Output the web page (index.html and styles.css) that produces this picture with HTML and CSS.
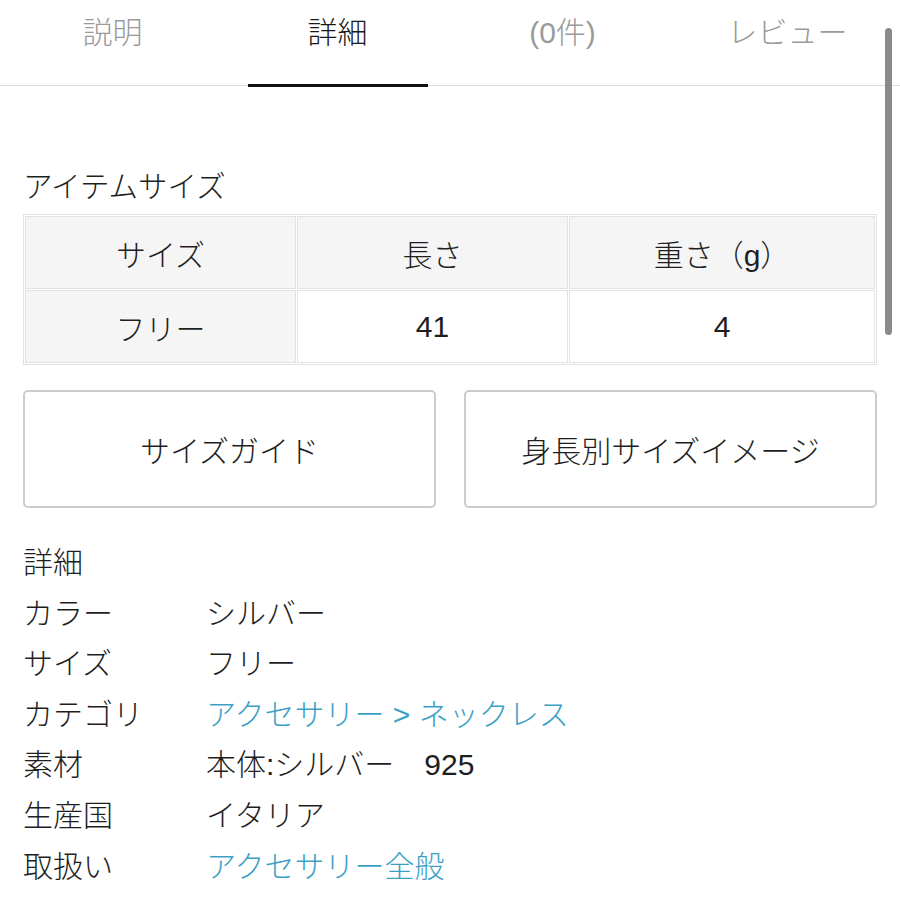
FILE: index.html
```html
<!DOCTYPE html>
<html lang="ja">
<head>
<meta charset="utf-8">
<title>詳細</title>
<link rel="stylesheet" href="styles.css">
</head>
<body>
<div class="page">
  <nav class="tabs">
    <div class="tab">説明</div>
    <div class="tab active">詳細</div>
    <div class="tab">(0件)</div>
    <div class="tab">レビュー</div>
  </nav>

  <section class="content">
    <h2 class="section-title">アイテムサイズ</h2>
    <table class="size-table">
      <tr class="head">
        <td class="c1">サイズ</td>
        <td class="c2">長さ</td>
        <td class="c3">重さ（g）</td>
      </tr>
      <tr>
        <td class="c1 shade">フリー</td>
        <td class="c2">41</td>
        <td class="c3">4</td>
      </tr>
    </table>

    <div class="buttons">
      <div class="btn">サイズガイド</div>
      <div class="btn">身長別サイズイメージ</div>
    </div>

    <div class="details">
      <div class="details-title">詳細</div>
      <div class="label">カラー</div><div class="value">シルバー</div>
      <div class="label">サイズ</div><div class="value">フリー</div>
      <div class="label">カテゴリ</div><div class="value link">アクセサリー &gt; ネックレス</div>
      <div class="label">素材</div><div class="value">本体:シルバー　925</div>
      <div class="label">生産国</div><div class="value">イタリア</div>
      <div class="label">取扱い</div><div class="value link">アクセサリー全般</div>
    </div>
  </section>

  <div class="scrollbar"></div>
</div>
</body>
</html>
```

FILE: styles.css
```css
html, body {
  margin: 0;
  padding: 0;
  background: #ffffff;
}

body {
  font-family: "Liberation Sans", "Noto Sans CJK JP", sans-serif;
  font-weight: 300;
  color: #1e1e1e;
  width: 900px;
  height: 900px;
  overflow: hidden;
}

.page {
  position: relative;
  width: 900px;
  height: 900px;
}

.tabs {
  display: flex;
  height: 85px;
  border-bottom: 1px solid #dcdcdc;
}

.tab {
  position: relative;
  width: 225px;
  text-align: center;
  font-size: 30px;
  line-height: 46px;
  padding-top: 10px;
  color: #9a9a9a;
}

.tab.active {
  color: #1a1a1a;
}

.tab.active::after {
  content: "";
  position: absolute;
  left: 23px;
  bottom: -2px;
  width: 180px;
  height: 3px;
  background: #111;
}

.content {
  padding: 0 23px;
}

.section-title {
  margin: 81px 0 7px 0;
  font-size: 29.5px;
  font-weight: 300;
  line-height: 40px;
}

.size-table {
  width: 854px;
  border: 1px solid #e2e2e2;
  border-spacing: 1px;
  table-layout: fixed;
}

.size-table td {
  border: 1px solid #e2e2e2;
  height: 71px;
  padding: 0;
  text-align: center;
  font-size: 30px;
  background: #ffffff;
}

.size-table .c1 { width: 269px; }
.size-table .c2 { width: 269px; }
.size-table .c3 { width: 304px; }

.size-table .head td,
.size-table td.shade {
  background: #f5f5f5;
}

.buttons {
  display: flex;
  gap: 28px;
  margin-top: 25px;
}

.btn {
  width: 413px;
  height: 118px;
  box-sizing: border-box;
  border: 2px solid #cccccc;
  border-radius: 5px;
  display: flex;
  align-items: center;
  justify-content: center;
  font-size: 30px;
  color: #1e1e1e;
}

.details {
  display: grid;
  grid-template-columns: 183px 1fr;
  margin-top: 30px;
  font-size: 30px;
  line-height: 50.6px;
}

.details-title {
  grid-column: 1 / 3;
}

.link {
  color: #3c9fc6;
}

.scrollbar {
  position: absolute;
  left: 885px;
  top: 28px;
  width: 7px;
  height: 307px;
  border-radius: 4px;
  background: #8a8a8a;
}
```
